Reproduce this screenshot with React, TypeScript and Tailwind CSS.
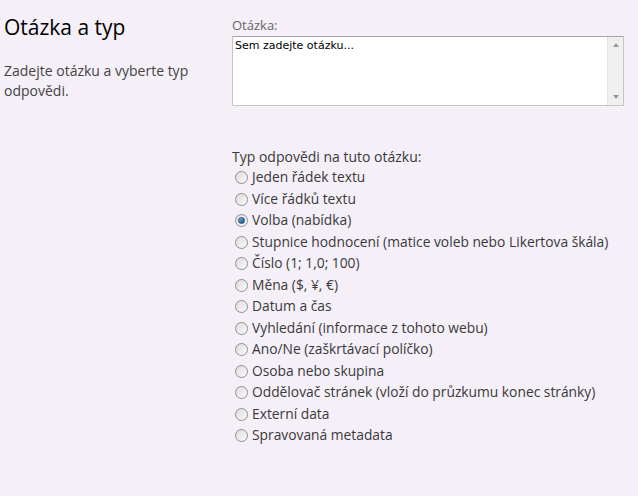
import { useState } from "react";

const types = [
  "Jeden řádek textu",
  "Více řádků textu",
  "Volba (nabídka)",
  "Stupnice hodnocení (matice voleb nebo Likertova škála)",
  "Číslo (1; 1,0; 100)",
  "Měna ($, ¥, €)",
  "Datum a čas",
  "Vyhledání (informace z tohoto webu)",
  "Ano/Ne (zaškrtávací políčko)",
  "Osoba nebo skupina",
  "Oddělovač stránek (vloží do průzkumu konec stránky)",
  "Externí data",
  "Spravovaná metadata",
];

// kulatý přepínač ve stylu starého Windows
function Radio({ checked }: { checked: boolean }) {
  return (
    <span className="w-[13px] h-[13px] rounded-full border border-[#8f8f8f] bg-gradient-to-br from-[#dcdcdc] to-[#fbfbfb] flex items-center justify-center shrink-0">
      {checked && (
        <span className="w-[7px] h-[7px] rounded-full bg-gradient-to-br from-[#6fc0ea] to-[#0b4c7a] border border-[#1f4f7a]" />
      )}
    </span>
  );
}

export default function App() {
  const [selected, setSelected] = useState(2);

  return (
    <div
      className="w-[638px] h-[496px] bg-[#f5eff7] flex text-[#3a3a3a]"
      style={{ fontFamily: '"Open Sans", "Noto Sans", sans-serif' }}
    >
      {/* levý sloupec */}
      <div className="w-[228px] pl-[4px] pt-[13px]">
        <h2 className="text-[21px] leading-[28px] font-medium text-black">Otázka a typ</h2>
        <p className="mt-[20px] text-[14px] leading-[20px] text-[#444]">
          Zadejte otázku a vyberte typ odpovědi.
        </p>
      </div>

      {/* pravý sloupec */}
      <div className="pl-[4px] pt-[16px] flex flex-col">
        <label className="text-[13px] leading-[18px] text-[#666]">Otázka:</label>
        <div className="mt-[2px] w-[392px] h-[70px] bg-white border border-[#c6c6c6] border-t-[#a5a5a5] flex">
          <div
            className="flex-1 px-[2px] pt-[2px] text-[11px] leading-[14px] text-black"
            style={{ fontFamily: '"DejaVu Sans", Verdana, sans-serif' }}
          >
            Sem zadejte otázku...
          </div>
          <div className="w-[16px] bg-[#f0f0f0] border-l border-[#e3e3e3] flex flex-col justify-between items-center py-[6px]">
            <span className="w-0 h-0 border-x-[3px] border-x-transparent border-b-[4px] border-b-[#9a9a9a]" />
            <span className="w-0 h-0 border-x-[3px] border-x-transparent border-t-[4px] border-t-[#9a9a9a]" />
          </div>
        </div>

        <div className="mt-[41px] text-[14px] leading-[20px]">Typ odpovědi na tuto otázku:</div>
        <div className="flex flex-col">
          {types.map((t, i) => (
            <label
              key={t}
              onClick={() => setSelected(i)}
              className="flex items-center gap-[4px] h-[21.5px] pl-[3px] text-[13.8px] cursor-pointer"
            >
              <Radio checked={selected === i} />
              <span>{t}</span>
            </label>
          ))}
        </div>
      </div>
    </div>
  );
}
